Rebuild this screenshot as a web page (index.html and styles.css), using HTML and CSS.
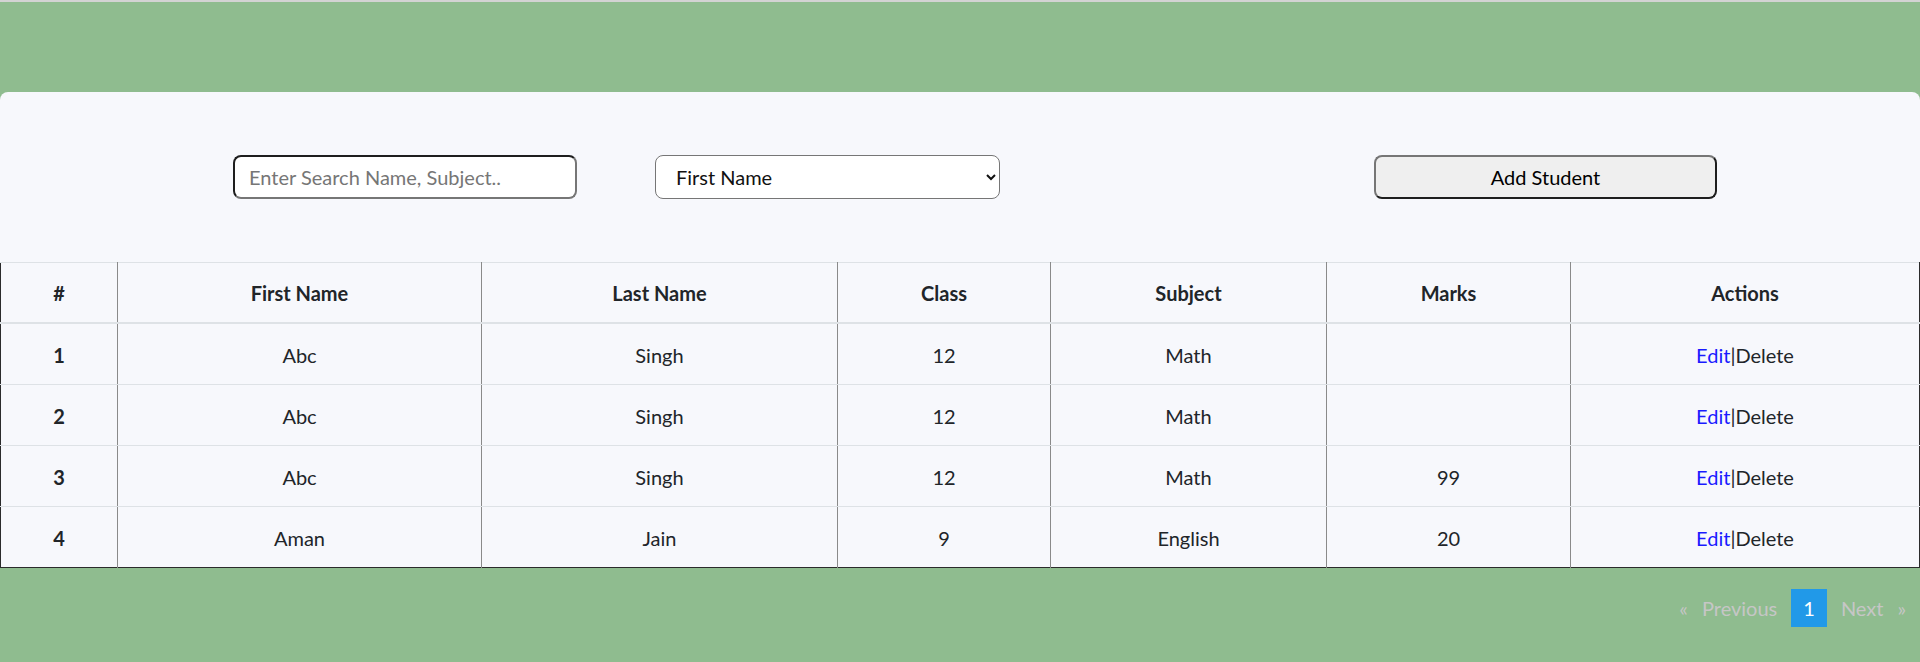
FILE: index.html
```html
<!DOCTYPE html>
<html lang="en">
<head>
<meta charset="utf-8">
<title>Students</title>
<link rel="stylesheet" href="styles.css">
</head>
<body>
<div class="topline"></div>
<main class="panel">
  <div class="toolbar">
    <input class="search" type="text" placeholder="Enter Search Name, Subject..">
    <select class="sort">
      <option>First Name</option>
      <option>Last Name</option>
      <option>Class</option>
      <option>Subject</option>
      <option>Marks</option>
    </select>
    <button class="add-btn" type="button">Add Student</button>
  </div>
  <table class="students">
    <colgroup>
      <col class="c-num"><col class="c-first"><col class="c-last"><col class="c-class"><col class="c-subject"><col class="c-marks"><col>
    </colgroup>
    <thead>
      <tr><th>#</th><th>First Name</th><th>Last Name</th><th>Class</th><th>Subject</th><th>Marks</th><th>Actions</th></tr>
    </thead>
    <tbody>
      <tr><th>1</th><td>Abc</td><td>Singh</td><td>12</td><td>Math</td><td></td><td><a class="edit" href="#">Edit</a>|<span class="del">Delete</span></td></tr>
      <tr><th>2</th><td>Abc</td><td>Singh</td><td>12</td><td>Math</td><td></td><td><a class="edit" href="#">Edit</a>|<span class="del">Delete</span></td></tr>
      <tr><th>3</th><td>Abc</td><td>Singh</td><td>12</td><td>Math</td><td>99</td><td><a class="edit" href="#">Edit</a>|<span class="del">Delete</span></td></tr>
      <tr><th>4</th><td>Aman</td><td>Jain</td><td>9</td><td>English</td><td>20</td><td><a class="edit" href="#">Edit</a>|<span class="del">Delete</span></td></tr>
    </tbody>
  </table>
</main>
<nav class="pager">
  <span class="pg-item">«</span>
  <span class="pg-item">Previous</span>
  <span class="pg-item active">1</span>
  <span class="pg-item">Next</span>
  <span class="pg-item">»</span>
</nav>
</body>
</html>
```
FILE: styles.css
```css
* { box-sizing: border-box; }

html, body {
  margin: 0;
  padding: 0;
}

body {
  background: #8fbc8f;
  font-family: Lato, "Liberation Sans", sans-serif;
  font-size: 20px;
  color: #212529;
  height: 662px;
  overflow: hidden;
}

.topline {
  height: 2px;
  background: #d3d3d3;
}

.panel {
  margin-top: 90px;
  background: #f7f8fc;
  border-radius: 8px 8px 0 0;
}

.toolbar {
  height: 170px;
  display: flex;
  align-items: center;
  padding-left: 233px;
}

.search {
  width: 344px;
  height: 44px;
  border: 2px solid;
  border-color: #1e1e1e #767676 #767676 #1e1e1e;
  border-radius: 8px;
  background: #fff;
  padding: 0 14px;
  font-family: inherit;
  font-size: 20px;
  color: #212529;
}

.search::placeholder {
  color: #767676;
}

.sort {
  margin-left: 78px;
  width: 345px;
  height: 44px;
  border: 1px solid #767676;
  border-radius: 8px;
  background: #fff;
  padding: 0 10px 0 16px;
  font-family: inherit;
  font-size: 20px;
  color: #111;
}

.add-btn {
  margin-left: 374px;
  width: 343px;
  height: 44px;
  border: 2px solid;
  border-color: #767676 #1e1e1e #1e1e1e #767676;
  border-radius: 8px;
  background: #efefef;
  font-family: inherit;
  font-size: 20px;
  color: #000;
}

.students {
  width: 100%;
  table-layout: fixed;
  border-collapse: collapse;
  border: 1px solid #2b2b2b;
  border-top-color: #dee2e6;
  background: #f7f8fc;
}

.c-num { width: 117px; }
.c-first { width: 364px; }
.c-last { width: 356px; }
.c-class { width: 213px; }
.c-subject { width: 276px; }
.c-marks { width: 244px; }

.students th,
.students td {
  text-align: center;
  line-height: 30px;
  font-size: 20px;
  padding: 16px 10px 14px;
  white-space: nowrap;
}

.students th + th,
.students th + td,
.students td + td {
  border-left: 1px solid #8a8a8a;
}

.students thead th {
  font-weight: 700;
  padding: 15px 10px 14px;
  border-bottom: 2px solid #dee2e6;
}

.students tbody th {
  font-weight: 700;
}

.students tbody tr:not(:last-child) th,
.students tbody tr:not(:last-child) td {
  border-bottom: 1px solid #dee2e6;
}

.edit {
  color: #1a1aff;
  text-decoration: none;
}

.del {
  color: #212529;
}

.pager {
  display: flex;
  justify-content: flex-end;
  align-items: center;
  gap: 14px;
  padding: 21px 14px 0 0;
}

.pg-item {
  color: #c6c6c6;
  line-height: 30px;
  font-size: 20px;
}

.pg-item.active {
  background: #2199e8;
  color: #fff;
  padding: 4px 12px;
}
```
